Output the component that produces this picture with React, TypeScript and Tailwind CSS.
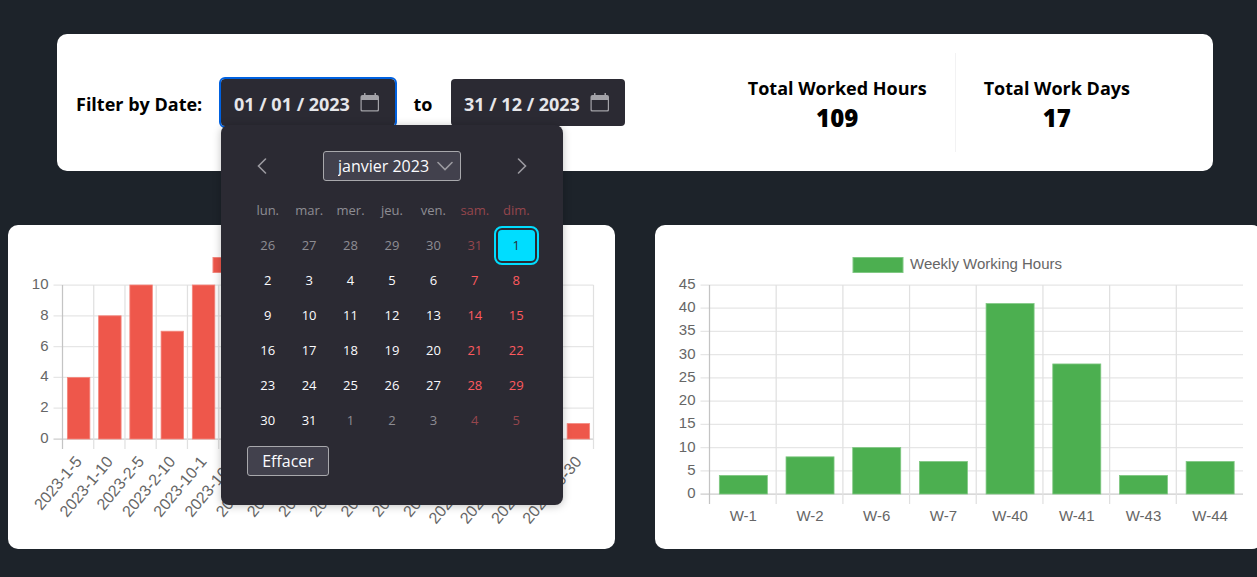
import { useState } from "react";

type Point = { label: string; value: number };

const daily: Point[] = [
  { label: "2023-1-5", value: 4 },
  { label: "2023-1-10", value: 8 },
  { label: "2023-2-5", value: 10 },
  { label: "2023-2-10", value: 7 },
  { label: "2023-10-1", value: 10 },
  { label: "2023-10-2", value: 8 },
  { label: "2023-10-3", value: 7 },
  { label: "2023-10-4", value: 6 },
  { label: "2023-10-5", value: 5 },
  { label: "2023-10-6", value: 5 },
  { label: "2023-10-7", value: 10 },
  { label: "2023-10-8", value: 7 },
  { label: "2023-10-9", value: 6 },
  { label: "2023-10-10", value: 5 },
  { label: "2023-10-12", value: 4 },
  { label: "2023-10-26", value: 6 },
  { label: "2023-10-30", value: 1 },
];

const weekly: Point[] = [
  { label: "W-1", value: 4 },
  { label: "W-2", value: 8 },
  { label: "W-6", value: 10 },
  { label: "W-7", value: 7 },
  { label: "W-40", value: 41 },
  { label: "W-41", value: 28 },
  { label: "W-43", value: 4 },
  { label: "W-44", value: 7 },
];

type ChartProps = {
  title: string;
  data: Point[];
  max: number;
  step: number;
  left: number;
  right: number;
  bottom: number;
  legendX: number;
  fill: string;
  edge: string;
  slanted?: boolean;
  closed?: boolean;
};

function BarChart({ title, data, max, step, left, right, bottom, legendX, fill, edge, slanted, closed }: ChartProps) {
  const top = 60;
  const slot = (right - left) / data.length;
  const barWidth = slot * 0.72;
  const y = (value: number) => bottom - (value / max) * (bottom - top);
  const ticks = Array.from({ length: max / step + 1 }, (_, i) => i * step);
  const lines = Array.from({ length: data.length + (closed ? 1 : 0) }, (_, i) => left + i * slot);

  return (
    <section className="rounded-[10px] bg-white" aria-label={title}>
      <svg viewBox="0 0 607 324" className="block h-auto w-full" fontFamily="'Liberation Sans', Arial, sans-serif" fontSize="15" fill="#666">
        <rect x={legendX} y="32.5" width="50" height="15" fill={fill} stroke={edge} />
        <text x={legendX + 57} y="44">{title}</text>
        {ticks.map((tick) => (
          <g key={tick}>
            <line x1={left - 9} x2={right} y1={y(tick)} y2={y(tick)} stroke={tick === 0 ? "#cccccc" : "#e6e6e6"} strokeWidth="1.25" />
            <text x={left - 14} y={y(tick) + 4} textAnchor="end">{tick}</text>
          </g>
        ))}
        {lines.map((x, i) => (
          <line key={x} x1={x} x2={x} y1={top} y2={bottom + 10} stroke={i === 0 ? "#c4c4c4" : "#e0e0e0"} strokeWidth="1.25" />
        ))}
        {data.map((point, i) => {
          const center = left + slot * (i + 0.5) + 0.5;
          return (
            <g key={point.label}>
              <rect x={center - barWidth / 2} y={y(point.value)} width={barWidth} height={bottom - y(point.value)} fill={fill} stroke={edge} strokeWidth="0.8" />
              {slanted ? (
                <text x={center + 4} y={bottom + 23} fontSize="16" textAnchor="end" transform={`rotate(-50 ${center + 4} ${bottom + 23})`}>{point.label}</text>
              ) : (
                <text x={center} y={bottom + 27} textAnchor="middle">{point.label}</text>
              )}
            </g>
          );
        })}
      </svg>
    </section>
  );
}

function CalendarIcon() {
  return (
    <svg width="20" height="20" viewBox="0 0 20 20" fill="#a3a2a8" aria-hidden="true">
      <path fillRule="evenodd" d="M4 0h1.500v2h9V0H16v2h1a2 2 0 0 1 2 2v13a1.500 1.500 0 0 1-1.500 1.500H2A1.500 1.500 0 0 1 .5 17V4a2 2 0 0 1 2-2H4zM1.700 7v9.500a.8.8 0 0 0 .8.800H17a.8.8 0 0 0 .8-.8V7z" />
    </svg>
  );
}

type DateFieldProps = { id: string; label: string; value: string; focused?: boolean; onChange: (value: string) => void };

function DateField({ id, label, value, focused, onChange }: DateFieldProps) {
  return (
    <div className={`flex h-[47px] w-[174px] items-center rounded-[4px] bg-[#2b2a33] pr-[15px] pl-[13px] ${focused ? "outline-2 outline-[#0061e0]" : ""}`}>
      <input
        id={id}
        type="text"
        value={value}
        onChange={(event) => onChange(event.target.value)}
        className="min-w-0 flex-1 bg-transparent pt-0.5 text-lg font-bold text-[#e6e6ea] outline-none"
      />
      <button type="button" aria-label={`Open calendar, ${label}`} className="shrink-0">
        <CalendarIcon />
      </button>
    </div>
  );
}

function Chevron({ path, width, height }: { path: string; width: number; height: number }) {
  return (
    <svg width={width} height={height} viewBox={`0 0 ${width} ${height}`} fill="none" stroke="#9b9aa0" strokeWidth="1.6" strokeLinecap="round" aria-hidden="true">
      <path d={path} />
    </svg>
  );
}

const weekdays = ["lun.", "mar.", "mer.", "jeu.", "ven.", "sam.", "dim."];

const weeks = Array.from({ length: 6 }, (_, week) =>
  Array.from({ length: 7 }, (_, day) => {
    const offset = week * 7 + day - 5;
    if (offset < 1) return { day: offset + 31, outside: true };
    if (offset > 31) return { day: offset - 31, outside: true };
    return { day: offset, outside: false };
  }),
);

function dayColor(column: number, outside: boolean) {
  if (column > 4) return outside ? "text-[#95464d]" : "text-[#ff5a5f]";
  return outside ? "text-[#8e8d93]" : "text-[#fbfbfe]";
}

function Calendar() {
  const [selected, setSelected] = useState(1);

  return (
    <div className="absolute top-full left-0 z-10 -mt-px w-[342px] rounded-[8px] bg-[#2b2a33] px-[26px] pt-[26px] pb-[29px] text-[#fbfbfe] shadow-[0_1px_8px_rgba(0,0,0,0.25)]">
      <div className="flex items-center justify-between px-[10px]">
        <button type="button" aria-label="Mois précédent">
          <Chevron width={10} height={16} path="M8.500 1 1.500 8l7 7" />
        </button>
        <div className="relative">
          <select aria-label="Mois" className="h-[30px] w-[138px] appearance-none rounded-[3px] border border-[#a8a8ac] bg-[#42414d] pl-[14px] text-base leading-7 outline-none">
            <option>janvier 2023</option>
          </select>
          <span className="pointer-events-none absolute inset-y-0 right-2 flex items-center">
            <Chevron width={16} height={10} path="M1 1.500l7 7 7-7" />
          </span>
        </div>
        <button type="button" aria-label="Mois suivant">
          <Chevron width={10} height={16} path="M1.500 1l7 7-7 7" />
        </button>
      </div>
      <table className="mt-3 w-full table-fixed border-collapse text-center text-[13px]">
        <thead>
          <tr className="h-[35px]">
            {weekdays.map((name, column) => (
              <th key={name} scope="col" className={`p-0 font-normal ${dayColor(column, true)}`}>{name}</th>
            ))}
          </tr>
        </thead>
        <tbody>
          {weeks.map((week, row) => (
            <tr key={row} className="h-[35px]">
              {week.map(({ day, outside }, column) => {
                const active = !outside && day === selected;
                return (
                  <td key={column} className="p-0">
                    <button
                      type="button"
                      onClick={() => !outside && setSelected(day)}
                      className={`mx-auto block h-[31px] w-[37px] rounded-[4px] ${active ? "bg-[#00ddff] text-[#2b2a33] outline-2 outline-offset-2 outline-[#00ddff]" : dayColor(column, outside)}`}
                    >
                      {day}
                    </button>
                  </td>
                );
              })}
            </tr>
          ))}
        </tbody>
      </table>
      <button type="button" className="mt-2 block h-[30px] w-[82px] rounded-[3px] border border-[#a8a8ac] bg-[#42414d] text-base leading-7">
        Effacer
      </button>
    </div>
  );
}

function Stat({ title, value }: { title: string; value: number }) {
  return (
    <div className="flex flex-col items-center justify-center px-7 pt-0.5">
      <div className="text-lg leading-7 font-bold">{title}</div>
      <div className="text-2xl leading-8 font-extrabold">{value}</div>
    </div>
  );
}

export default function App() {
  const [from, setFrom] = useState("01 / 01 / 2023");
  const [to, setTo] = useState("31 / 12 / 2023");

  return (
    <main className="min-h-screen overflow-hidden bg-[#1d232a] pt-[34px] pb-7 font-['Open_Sans','Noto_Sans',sans-serif] text-black">
      <section className="mr-11 ml-[57px] flex h-[137px] items-center rounded-[10px] bg-white pl-[19px]">
        <div className="flex items-center">
          <label htmlFor="from" className="w-[145px] pt-0.5 text-lg font-bold whitespace-nowrap">Filter by Date:</label>
          <div className="relative">
            <DateField id="from" label="from" value={from} onChange={setFrom} focused />
            <Calendar />
          </div>
          <label htmlFor="to" className="w-14 pt-0.5 text-center text-lg font-bold">to</label>
          <DateField id="to" label="to" value={to} onChange={setTo} />
        </div>
        <div className="mr-[55px] ml-auto flex h-[99px] divide-x divide-[#f2f2f3]">
          <Stat title="Total Worked Hours" value={109} />
          <Stat title="Total Work Days" value={17} />
        </div>
      </section>
      <div className="mt-[54px] -mr-[5px] ml-2 grid grid-cols-2 gap-10">
        <BarChart title="Daily Working Hours" data={daily} max={10} step={2} left={54.500} right={585.500} bottom={214} legendX={205} fill="#ee574b" edge="#f4877e" slanted closed />
        <BarChart title="Weekly Working Hours" data={weekly} max={45} step={5} left={54.500} right={588} bottom={269} legendX={198} fill="#4caf50" edge="#80c883" />
      </div>
    </main>
  );
}
